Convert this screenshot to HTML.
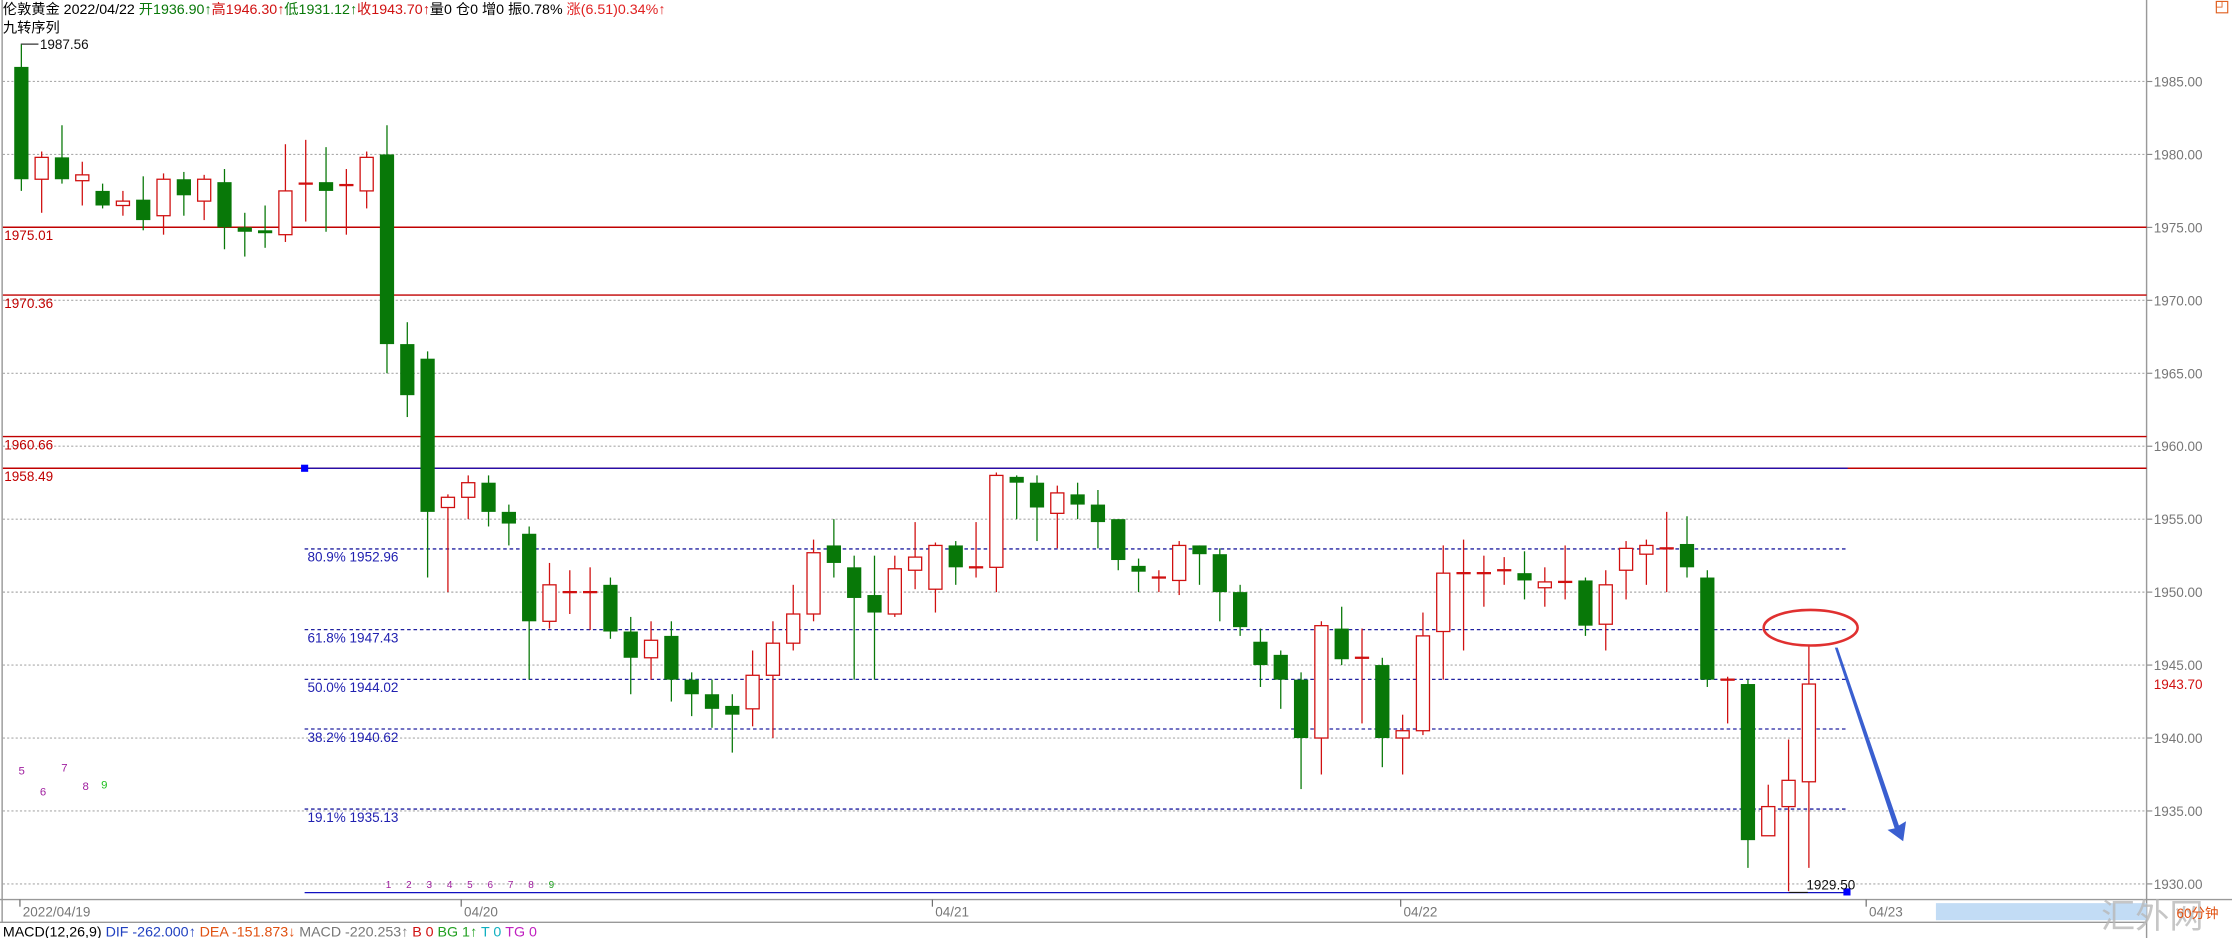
<!DOCTYPE html>
<html><head><meta charset="utf-8"><style>
html,body{margin:0;padding:0;background:#fff;overflow:hidden}
svg{display:block}
text{font-family:"Liberation Sans","Noto Sans CJK SC",sans-serif}
</style></head><body>
<svg id="s" width="2232" height="938" viewBox="0 0 1568 659" preserveAspectRatio="none" xmlns="http://www.w3.org/2000/svg">
<rect width="1568" height="659" fill="#fff"/>
<g id="grid"></g>
<g id="lines"></g>
<g id="candles"></g>
<g id="top"></g>
</svg>
<script>
var NS="http://www.w3.org/2000/svg";
function Y(p){return 621-(p-1930)*10.25;}
function el(parent,tag,attrs,txt){var e=document.createElementNS(NS,tag);for(var k in attrs)e.setAttribute(k,attrs[k]);if(txt!==undefined)e.textContent=txt;document.getElementById(parent).appendChild(e);return e;}
for(var p=1930;p<=1985;p+=5){var y=Y(p);el('grid','line',{x1:2,y1:y,x2:1508,y2:y,stroke:'#aaa','stroke-width':0.8,'stroke-dasharray':'1.5,1.5'});
el('grid','line',{x1:1508,y1:y,x2:1512,y2:y,stroke:'#888','stroke-width':0.8});
el('grid','text',{x:1513,y:y+3.5,'font-size':9.5,fill:'#777'},p.toFixed(2));}
el('grid','line',{x1:1508,y1:0,x2:1508,y2:659,stroke:'#999','stroke-width':1});
el('grid','line',{x1:1.5,y1:0,x2:1.5,y2:648,stroke:'#999','stroke-width':1});
[[1975.01,'1975.01'],[1970.36,'1970.36'],[1960.66,'1960.66'],[1958.49,'1958.49']].forEach(function(a){var y=Y(a[0]);
el('lines','line',{x1:2,y1:y,x2:1508,y2:y,stroke:'#c00000','stroke-width':1});
el('lines','text',{x:3,y:y+9,'font-size':9.5,fill:'#c00000'},a[1]);});
el('lines','line',{x1:214,y1:Y(1958.49),x2:1298,y2:Y(1958.49),stroke:'#1010c0','stroke-width':0.9});
el('lines','rect',{x:211.5,y:Y(1958.49)-2.5,width:5,height:5,fill:'#0000ff'});
[[1952.96,'80.9% 1952.96'],[1947.43,'61.8% 1947.43'],[1944.02,'50.0% 1944.02'],[1940.62,'38.2% 1940.62'],[1935.13,'19.1% 1935.13']].forEach(function(a){var y=Y(a[0]);
el('lines','line',{x1:214,y1:y,x2:1298,y2:y,stroke:'#2020a0','stroke-width':0.9,'stroke-dasharray':'2.5,2'});
el('lines','text',{x:216,y:y+9,'font-size':9.5,fill:'#2020b0'},a[1]);});
el('lines','line',{x1:214,y1:Y(1929.5)+1,x2:1298,y2:Y(1929.5)+1,stroke:'#1010c0','stroke-width':0.9});
el('lines','rect',{x:1295,y:Y(1929.5)-2,width:5,height:5,fill:'#0000ff'});
var d=[[1986,1978.3,1987.56,1977.5],[1978.3,1979.8,1980.2,1976],[1979.8,1978.3,1982,1978],[1978.2,1978.6,1979.5,1976.5],[1977.5,1976.5,1978,1976.3],[1976.5,1976.8,1977.5,1975.8],[1976.9,1975.5,1978.5,1974.8],[1975.8,1978.3,1978.7,1974.5],[1978.3,1977.2,1978.8,1975.8],[1976.8,1978.3,1978.6,1975.5],
[1978.1,1975,1979,1973.5],[1975,1974.7,1976,1973],[1974.8,1974.6,1976.5,1973.6],[1974.5,1977.5,1980.7,1974],[1978,1978,1981,1975.4],[1978.1,1977.5,1980.5,1974.7],[1977.9,1977.9,1979,1974.5],[1977.5,1979.8,1980.2,1976.3],[1980,1967,1982,1965],[1967,1963.5,1968.5,1962],
[1966,1955.5,1966.5,1951],[1955.8,1956.5,1956.7,1950],[1956.5,1957.5,1958,1955],[1957.5,1955.5,1958,1954.5],[1955.5,1954.7,1956,1953.2],[1954,1948,1954.5,1944],[1948,1950.5,1952,1947.5],[1950,1950,1951.5,1948.5],[1950,1950,1951.7,1947.4],[1950.5,1947.3,1951,1946.8],
[1947.3,1945.5,1948.3,1943],[1945.5,1946.7,1948,1944],[1947,1944,1948,1942.5],[1944,1943,1944.5,1941.5],[1943,1942,1944,1940.7],[1942.2,1941.6,1943,1939],[1942,1944.3,1946,1940.8],[1944.3,1946.5,1948,1940],[1946.5,1948.5,1950.5,1946],[1948.5,1952.7,1953.6,1948],
[1953.2,1952,1955,1951],[1951.7,1949.6,1952.5,1944],[1949.8,1948.6,1952.5,1944],[1948.5,1951.6,1952.5,1948.3],[1951.5,1952.4,1954.8,1950.2],[1950.2,1953.2,1953.4,1948.6],[1953.2,1951.7,1953.5,1950.5],[1951.7,1951.7,1954.8,1951],[1951.7,1958,1958.2,1950],[1957.9,1957.5,1958,1955],
[1957.5,1955.8,1958,1953.5],[1955.4,1956.8,1957.3,1953],[1956.7,1956,1957.5,1955],[1956,1954.8,1957,1953],[1955,1952.2,1955,1951.5],[1951.8,1951.4,1952.3,1950],[1951,1951,1951.5,1950],[1950.8,1953.2,1953.5,1949.8],[1953.2,1952.6,1953.2,1950.5],[1952.6,1950,1953,1948],
[1950,1947.6,1950.5,1947],[1946.6,1945,1947.5,1943.5],[1945.7,1944,1946,1942],[1944,1940,1944.5,1936.5],[1940,1947.7,1948,1937.5],[1947.5,1945.4,1949,1945],[1945.5,1945.5,1947.5,1941],[1945,1940,1945.5,1938],[1940,1940.5,1941.6,1937.5],[1940.5,1947,1948.6,1940.2],
[1947.3,1951.3,1953.2,1944],[1951.3,1951.3,1953.6,1946],[1951.3,1951.3,1952.5,1949],[1951.5,1951.5,1952.4,1950.5],[1951.3,1950.8,1952.8,1949.5],[1950.3,1950.7,1951.7,1949],[1950.7,1950.7,1953.2,1949.5],[1950.8,1947.7,1951,1947],[1947.8,1950.5,1951.5,1946],[1951.5,1953,1953.5,1949.5],
[1952.6,1953.2,1953.6,1950.5],[1953,1953,1955.5,1950],[1953.3,1951.7,1955.2,1951],[1951,1944,1951.5,1943.5],[1944,1944,1944.2,1941],[1943.7,1933,1944,1931.1],[1933.3,1935.3,1936.8,1933.3],[1935.3,1937.1,1939.9,1929.5],[1937,1943.7,1946.3,1931.1]];
d.forEach(function(c,i){var x=15+i*14.27,o=c[0],cl=c[1],h=c[2],l=c[3];var up=cl>=o&&!(i==12);var col=up?'#d01010':'#087808';
var top=Math.max(o,cl),bot=Math.min(o,cl);
el('candles','line',{x1:x,y1:Y(h),x2:x,y2:Y(l),stroke:col,'stroke-width':0.9});
var bh=Y(bot)-Y(top);
if(bh<1.2){el('candles','rect',{x:x-5,y:Y(top)-0.8,width:10,height:1.6,fill:col});}
else if(up){el('candles','rect',{x:x-4.6,y:Y(top),width:9.2,height:bh,fill:'#fff',stroke:col,'stroke-width':0.9});}
else{el('candles','rect',{x:x-5,y:Y(top),width:10,height:bh,fill:col});}
});
el('top','polyline',{points:'15,'+Y(1987.56)+' 15,31 27,31',fill:'none',stroke:'#333','stroke-width':0.8});
el('top','text',{x:28,y:34.5,'font-size':9.5,fill:'#111'},'1987.56');
el('top','polyline',{points:'1257,627 1270,627',stroke:'#111','stroke-width':0.8});
el('top','text',{x:1269,y:625,'font-size':9.5,fill:'#111'},'1929.50');
el('top','ellipse',{cx:1272,cy:441,rx:33,ry:12.5,fill:'none',stroke:'#e03030','stroke-width':1.8});
el('top','polygon',{points:'1289,455 1291,455 1334,580 1339,577 1337,591 1326,583 1331,582',fill:'#3a5fd0'});
var t=el('top','text',{x:2,y:10,'font-size':10,fill:'#000'});
[['伦敦黄金 2022/04/22 ','#000'],['开','#087808'],['1936.90↑','#087808'],['高','#d01010'],['1946.30↑','#d01010'],['低','#087808'],['1931.12↑','#087808'],['收','#d01010'],['1943.70↑','#d01010'],['量0  仓0  增0  振0.78%  ','#000'],['涨(6.51)0.34%↑','#e02020']].forEach(function(a){var s=document.createElementNS(NS,'tspan');s.setAttribute('fill',a[1]);s.textContent=a[0];t.appendChild(s);});
el('top','text',{x:2,y:23,'font-size':10,fill:'#000'},'九转序列');
el('top','rect',{x:1557,y:1,width:8,height:8,fill:'none',stroke:'#e06020','stroke-width':0.8});
el('top','rect',{x:1557,y:1,width:4,height:4,fill:'none',stroke:'#e06020','stroke-width':0.6});
[[15,544,'5','#a020a0'],[30,559,'6','#a020a0'],[45,542,'7','#a020a0'],[60,555,'8','#a020a0'],[73,554,'9','#20c020']].forEach(function(a){el('top','text',{x:a[0]-2,y:a[1],'font-size':8,fill:a[3]},a[2]);});
for(var k=1;k<=9;k++){el('top','text',{x:271+(k-1)*14.3,y:624,'font-size':7,fill:k==9?'#20a020':'#a020a0'},String(k));}
el('top','text',{x:1513,y:484,'font-size':9.5,fill:'#d01010'},'1943.70');
el('top','line',{x1:0,y1:632,x2:1568,y2:632,stroke:'#999','stroke-width':1});
el('top','line',{x1:0,y1:648,x2:1508,y2:648,stroke:'#999','stroke-width':1});
el('top','rect',{x:1360,y:634.5,width:148,height:12,fill:'#c2dcf5'});
el('top','text',{x:1476,y:652,'font-size':24,fill:'#b8b8b8','fill-opacity':0.8},'汇外网');
[[16,'2022/04/19'],[326,'04/20'],[657,'04/21'],[986,'04/22'],[1313,'04/23']].forEach(function(a){el('top','line',{x1:a[0]-2,y1:632,x2:a[0]-2,y2:637,stroke:'#666','stroke-width':0.8});el('top','text',{x:a[0],y:644,'font-size':9.5,fill:'#777'},a[1]);});
el('top','text',{x:1529,y:645,'font-size':9.5,fill:'#e05010'},'60分钟');
var m=el('top','text',{x:2,y:658,'font-size':10,fill:'#000'});
[['MACD(12,26,9)  ','#000'],['DIF -262.000↑  ','#2040c0'],['DEA -151.873↓  ','#e05010'],['MACD -220.253↑  ','#777'],['B 0  ','#d01010'],['BG 1↑  ','#20a020'],['T 0  ','#10b0c0'],['TG 0','#c020c0']].forEach(function(a){var s=document.createElementNS(NS,'tspan');s.setAttribute('fill',a[1]);s.textContent=a[0];m.appendChild(s);});
</script>
</body></html>
